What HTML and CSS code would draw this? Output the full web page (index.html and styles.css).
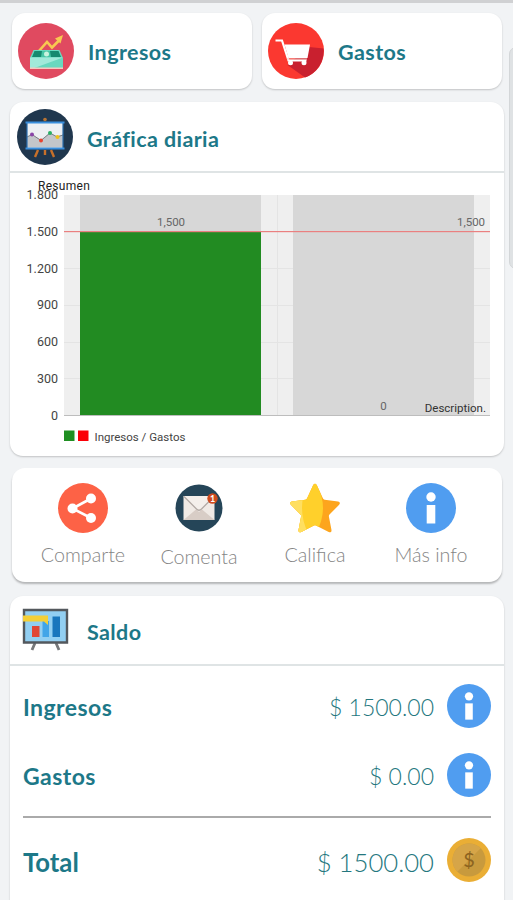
FILE: index.html
```html
<!DOCTYPE html>
<html lang="es">
<head>
    <meta charset="UTF-8">
    <meta name="viewport" content="width=device-width, initial-scale=1.0">
    <title>Resumen</title>
    <link rel="stylesheet" href="styles.css">
</head>
<body>

<!-- Shared icons -->
<svg class="symbols" width="0" height="0">
    <symbol id="info" viewBox="0 0 50 50">
        <circle cx="25" cy="25" r="25" fill="#509df0"/>
        <circle cx="25" cy="14" r="4.7" fill="#fff"/>
        <path d="M20.7 22h8.6v18.5h-8.6z" fill="#fff"/>
    </symbol>
</svg>

<main class="screen">
    <div class="shortcuts">
        <a class="card shortcut">
            <svg class="icon" viewBox="0 0 56 56">
                <circle cx="28" cy="28" r="28" fill="#e04a60"/>
                <path d="M20.500 28.500l8.500-9.500 5 5.500 8-8" fill="none" stroke="#f8c851" stroke-width="2.600"/>
                <path d="M37 15.500l8-3.500-2.500 8.500z" fill="#f8c851"/>
                <path d="M15.500 27h26l3.500 8v10.500H12V35z" fill="#68d8bf"/>
                <path d="M16.500 28h24l2.500 6H14z" fill="#16896f"/>
                <path d="M24 28h8l1 6H23z" fill="#45c5a5"/>
                <circle cx="28.500" cy="31" r="2.500" fill="#c9f3df"/>
                <path d="M12 34.500h33L15 45.500h-3z" fill="#a1eada"/>
                <path d="M12 44.500h33v1.500H12z" fill="#f4c9bf"/>
            </svg>
            <span class="title">Ingresos</span>
        </a>
        <a class="card shortcut">
            <svg class="icon" viewBox="0 0 56 56">
                <circle cx="28" cy="28" r="28" fill="#fb3830"/>
                <path d="M41 24l14.500 1.500A28 28 0 0 1 37 54.500L19.500 42z" fill="#c9202f"/>
                <path d="M7.500 17.500h6.500l6.500 20h18" fill="none" stroke="#fff" stroke-width="2.200"/>
                <path d="M16.500 21.500h25.500l-2.500 13.500H20.500z" fill="#fff"/>
                <path d="M19 36h20" stroke="#f2bdb9" stroke-width="1"/>
                <circle cx="22.500" cy="39.800" r="2.500" fill="#fff"/>
                <circle cx="36" cy="39.800" r="2.500" fill="#fff"/>
            </svg>
            <span class="title">Gastos</span>
        </a>
    </div>

    <section class="card chart-card">
        <header class="card-header">
            <svg class="icon" viewBox="0 0 56 56">
                <circle cx="28" cy="28" r="28" fill="#20374e"/>
                <circle cx="28" cy="10.500" r="1.800" fill="#b87333"/>
                <path d="M21 41l-3 7M28 41v5M34 41l3 7" stroke="#c8702a" stroke-width="2.400"/>
                <path d="M10 14h36v25H10z" fill="#edf0f3"/>
                <path d="M10 28l5-3 9 6 9-7.500 7 4 6-2v13H10z" fill="#c3c6ca"/>
                <path d="M10 28l5-2.500 9 6 9-7.500 7 4 6-2" fill="none" stroke="#7b8187" stroke-width="1"/>
                <path d="M10 13v27M46 13v27" stroke="#2a6eae" stroke-width="1.200"/>
                <path d="M8.500 13.500h39M8.500 39.500h39" stroke="#3a8fdd" stroke-width="2"/>
                <circle cx="15" cy="25.500" r="2" fill="#8a44a8"/>
                <circle cx="24" cy="31.500" r="2" fill="#e8432f"/>
                <circle cx="33" cy="24" r="2" fill="#27b065"/>
                <circle cx="40.500" cy="28" r="2" fill="#efc21b"/>
            </svg>
            <span class="title">Gráfica diaria</span>
        </header>

        <svg class="chart" viewBox="0 0 494 283">
            <path d="M54 22h426v220.500H54z" fill="#efefef"/>
            <path class="grid" d="M54 95.500h426M54 132.500h426M54 169.500h426M54 205.500h426M267.500 22v220"/>
            <path d="M70 22h181v220H70zM283 22h181v220H283z" fill="#d7d7d7"/>
            <path d="M70 59h181v183H70z" fill="#228b22"/>
            <rect x="54" y="242" width="426" height="1" fill="#bdbdbd"/>
            <rect x="54" y="58" width="426" height="1.200" fill="#ea8080"/>

            <g class="axis">
                <text x="48" y="26">1.800</text>
                <text x="48" y="62.500">1.500</text>
                <text x="48" y="99.500">1.200</text>
                <text x="48" y="136">900</text>
                <text x="48" y="173">600</text>
                <text x="48" y="209.500">300</text>
                <text x="48" y="246.500">0</text>
            </g>
            <text class="chart-name" x="28" y="16.500">Resumen</text>
            <g class="values">
                <text x="161" y="52.500">1,500</text>
                <text x="461" y="52.500">1,500</text>
                <text x="373.500" y="236.500">0</text>
            </g>
            <text class="description" x="476" y="239">Description.</text>

            <path d="M54 257.500h10.500V268H54z" fill="#1f8f22"/>
            <path d="M68 257.500h10.500V268H68z" fill="#fb0007"/>
            <text class="legend" x="84.500" y="267.500">Ingresos / Gastos</text>
        </svg>
    </section>

    <nav class="card actions">
        <a class="action">
            <svg viewBox="0 0 50 50">
                <circle cx="25" cy="25" r="25" fill="#fd6246"/>
                <path d="M33 15.500L14.500 25.500 33 35" fill="none" stroke="#fff" stroke-width="2.600"/>
                <circle cx="33" cy="15.500" r="5" fill="#fff"/>
                <circle cx="14.500" cy="25.500" r="5" fill="#fff"/>
                <circle cx="33" cy="35" r="5" fill="#fff"/>
            </svg>
            <span>Comparte</span>
        </a>
        <a class="action comment">
            <svg viewBox="0 0 50 50">
                <circle cx="25" cy="25" r="23.500" fill="#254558"/>
                <path d="M9.500 13h31v24h-31z" fill="#f0eae5"/>
                <path d="M9.500 37L22 26.500h6L40.500 37z" fill="#d8cdc6"/>
                <path d="M9.500 13L25 29l15.500-16z" fill="#f4efeb"/>
                <path d="M10 13.500l12.500 12.500q2.500 2.500 5 0L40 13.500" fill="none" stroke="#b2a9a4" stroke-width="1.200"/>
                <circle cx="38.500" cy="15.500" r="5.200" fill="#cf4b1f"/>
                <text class="badge" x="38.500" y="18.700">1</text>
            </svg>
            <span>Comenta</span>
        </a>
        <a class="action">
            <svg viewBox="0 0 50 50">
                <clipPath id="star">
                    <path d="M23.200 2q1.800-2.500 3.600 0l6.200 13.500q.5 1 1.700 1.200l13.300 1.900q3.200.8.900 3.400l-9.400 9.500q-.8.900-.6 2l2.600 13.500q.2 3.200-2.800 2L26 42.500q-1-.6-2 0L11.300 49q-3 1.200-2.800-2l2.600-13.500q.2-1.100-.6-2L1.100 22q-2.300-2.600.9-3.400l13.300-1.900q1.200-.2 1.700-1.200z"/>
                </clipPath>
                <g clip-path="url(#star)">
                    <path d="M0 0h50v50H0z" fill="#fda51d"/>
                    <path d="M0 0h26q14 25 0 50H0z" fill="#ffd02b"/>
                    <path d="M0 0h18q-12 25 0 50H0z" fill="#ffdf60"/>
                </g>
            </svg>
            <span>Califica</span>
        </a>
        <a class="action">
            <svg><use href="#info"/></svg>
            <span>Más info</span>
        </a>
    </nav>

    <section class="card balance">
        <header class="card-header">
            <svg class="icon board" viewBox="0 0 48 44">
                <path d="M13 35l-3 7M34 35l3 7" stroke="#77797b" stroke-width="2.800"/>
                <path d="M2 2h43v32.500H2z" fill="#92cff2" stroke="#53585d" stroke-width="2.400"/>
                <path d="M10 18h7.500v11H10z" fill="#e04736"/>
                <path d="M20.500 13H27v16h-6.500z" fill="#42a5e8"/>
                <path d="M30.500 8.500H38V29h-7.500z" fill="#1976bd"/>
                <path d="M1 7.500h25v9.500l-4-3.500H1z" fill="#f4cf37"/>
            </svg>
            <span class="title">Saldo</span>
        </header>
        <div class="rows">
            <div class="row">
                <span class="label">Ingresos</span>
                <span class="amount">$ 1500.00</span>
                <svg><use href="#info"/></svg>
            </div>
            <div class="row">
                <span class="label">Gastos</span>
                <span class="amount">$ 0.00</span>
                <svg><use href="#info"/></svg>
            </div>
            <div class="row total">
                <span class="label">Total</span>
                <span class="amount">$ 1500.00</span>
                <svg viewBox="0 0 44 44">
                    <circle cx="22" cy="22" r="22" fill="#eaae35"/>
                    <circle cx="22" cy="22" r="16.500" fill="#c89a3d"/>
                    <path d="M10.300 33.700A16.500 16.500 0 0 1 33.700 10.300z" fill="#d6a548"/>
                    <text class="coin" x="22" y="29">$</text>
                </svg>
            </div>
        </div>
    </section>
</main>

</body>
</html>
```
FILE: styles.css
```css
* {
    box-sizing: border-box;
}
body {
    margin: 0;
    height: 900px;
    overflow: hidden;
    background-color: #f1f3f5;
    font-family: Lato, "Open Sans", sans-serif;
}
.symbols {
    position: absolute;
}
.screen {
    position: relative;
    height: 900px;
    overflow: hidden;
    padding: 10px 9px 0 10px;
    border-top: 3px solid #d0d1d3;
}

/* Edge of the panel on the right */
.screen::after {
    content: "";
    position: absolute;
    top: 44px;
    right: -10px;
    width: 12px;
    height: 220px;
    border: 1px solid #d3d6d8;
    border-radius: 8px;
    background-color: #dfe2e4;
}

.card {
    background-color: #fff;
    border-radius: 13px;
    box-shadow: 0 1px 2px rgba(0, 0, 0, 0.2);
}
.title,
.label {
    color: #1d7888;
    font-weight: bold;
}
.title {
    padding-top: 2px;
    font-size: 21.5px;
    letter-spacing: 0.4px;
}
.icon {
    width: 56px;
    height: 56px;
    flex: none;
}

/* Shortcuts */
.shortcuts {
    display: grid;
    grid-template-columns: 240px 240px;
    gap: 10px;
    padding-left: 2px;
}
.shortcut {
    display: flex;
    align-items: center;
    gap: 14px;
    height: 76px;
    padding-left: 6px;
}

/* Chart */
.chart-card {
    height: 354px;
    margin-top: 13px;
}
.card-header {
    display: flex;
    align-items: center;
    gap: 14px;
    height: 71px;
    padding-left: 7px;
    border-bottom: 2px solid #dfe4e5;
}
.card-header .title {
    padding-top: 4px;
}
.chart {
    display: block;
    width: 494px;
    height: 283px;
    font-family: Roboto, sans-serif;
    fill: #444;
}
.grid {
    fill: none;
    stroke: #e4e4e4;
}
.axis {
    font-size: 12.5px;
    text-anchor: end;
}
.chart-name {
    font-size: 12px;
    letter-spacing: 0.3px;
    fill: #222;
}
.values {
    font-size: 11.5px;
    text-anchor: middle;
    fill: #666;
}
.description {
    font-size: 11.5px;
    text-anchor: end;
    fill: #333;
}
.legend {
    font-size: 11.5px;
}

/* Actions */
.actions {
    display: grid;
    grid-template-columns: repeat(4, 116px);
    height: 114px;
    margin: 12px 2px 0;
    padding: 15px 0 0 13px;
    box-shadow: 0 2px 2px rgba(0, 0, 0, 0.25);
}
.action {
    display: flex;
    flex-direction: column;
    align-items: center;
    gap: 10px;
    color: #858585;
    font-size: 19.7px;
    font-weight: 300;
    line-height: 24px;
}
.action svg {
    width: 50px;
    height: 50px;
}
.comment {
    gap: 12px;
}
.badge {
    font: bold 9px Lato, sans-serif;
    text-anchor: middle;
    fill: #fff;
}

/* Balance */
.balance {
    height: 330px;
    margin-top: 14px;
}
.balance .card-header {
    height: 70px;
    gap: 17px;
    padding-left: 12px;
}
.board {
    width: 48px;
    height: 44px;
}
.rows {
    padding: 5px 13px 0;
}
.row {
    display: flex;
    align-items: center;
    height: 69px;
    font-size: 23px;
}
.row .label {
    padding-top: 3px;
    letter-spacing: 0.45px;
}
.row svg {
    width: 44px;
    height: 44px;
    margin-left: 13px;
}
.amount {
    padding-top: 3px;
    margin-left: auto;
    color: #24777e;
    font-weight: 300;
}
.total {
    height: 86px;
    margin-top: 7px;
    border-top: 2px solid #aaa;
    font-size: 25.7px;
}
.total .label {
    letter-spacing: 0;
}
.coin {
    font: 20px Lato, sans-serif;
    text-anchor: middle;
    fill: #8d6420;
}
```
